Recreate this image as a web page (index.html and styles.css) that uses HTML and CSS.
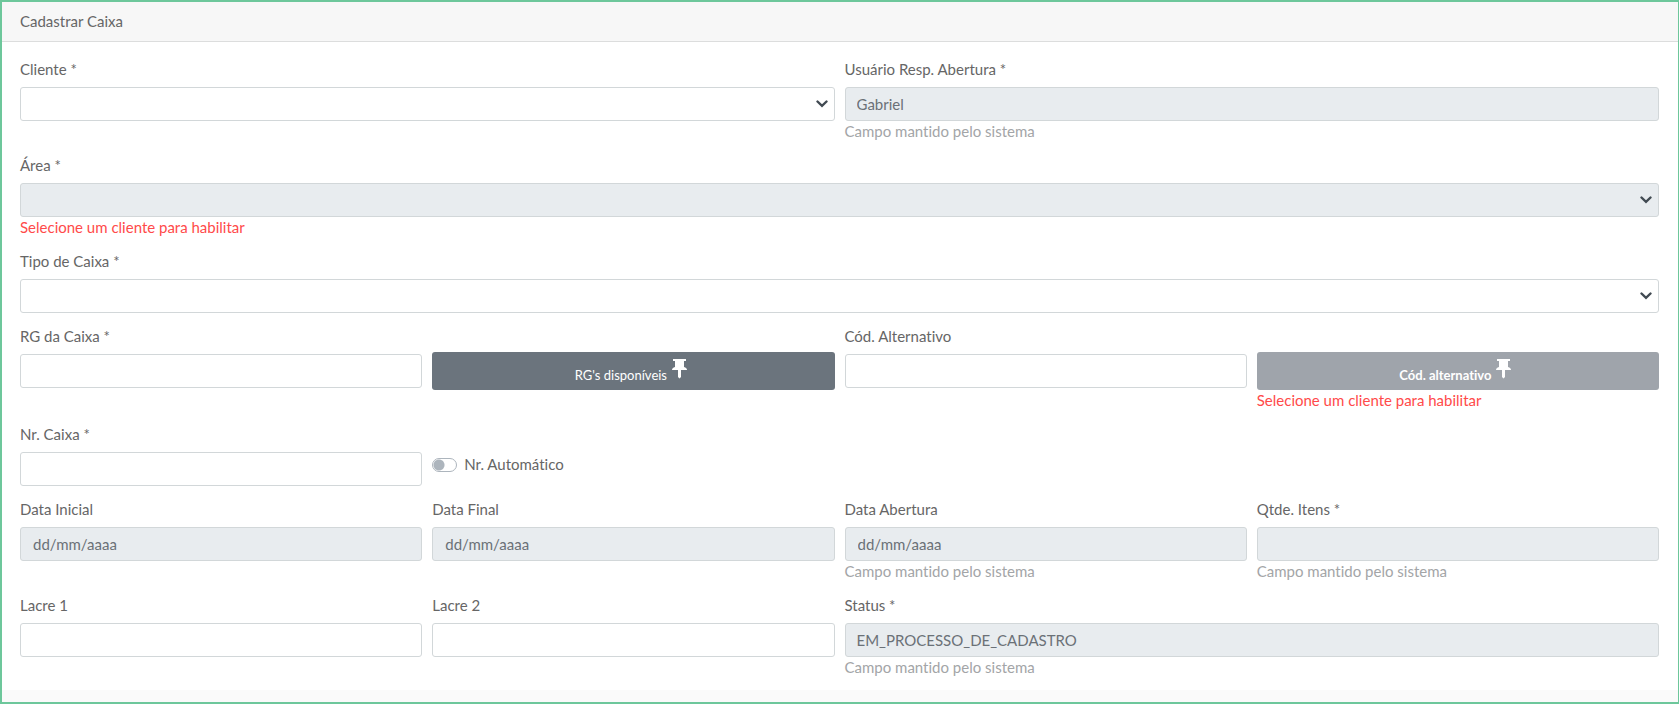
FILE: index.html
```html
<!DOCTYPE html>
<html lang="pt-BR">
<head>
<meta charset="utf-8">
<meta name="viewport" content="width=device-width, initial-scale=1">
<title>Cadastrar Caixa</title>
<link rel="stylesheet" href="styles.css">
</head>
<body>
<main class="card">
  <h1 class="card-header">Cadastrar Caixa</h1>
  <form class="card-body">
    <div class="field half">
      <label for="cliente">Cliente *</label>
      <select class="control" id="cliente"><option></option></select>
    </div>
    <div class="field half">
      <label for="usuario">Usuário Resp. Abertura *</label>
      <input class="control" id="usuario" type="text" value="Gabriel" disabled>
      <small class="hint">Campo mantido pelo sistema</small>
    </div>

    <div class="field full">
      <label for="area">Área *</label>
      <select class="control" id="area" disabled><option></option></select>
      <small class="hint error">Selecione um cliente para habilitar</small>
    </div>

    <div class="field full">
      <label for="tipo">Tipo de Caixa *</label>
      <select class="control" id="tipo"><option></option></select>
    </div>

    <div class="field">
      <label for="rg">RG da Caixa *</label>
      <input class="control" id="rg" type="text">
    </div>
    <div class="field action">
      <button class="btn" type="button">
        <span class="btn-text">RG's disponíveis</span>
        <svg class="pin" viewBox="0 0 15 20" aria-hidden="true"><path d="M1 0h13v2h-2v6c2 .5 3 1.500 3 3H9v7l-1.500 1.500L6 18v-7H0c0-1.500 1-2.500 3-3V2H1z"/></svg>
      </button>
    </div>
    <div class="field">
      <label for="codigo">Cód. Alternativo</label>
      <input class="control" id="codigo" type="text">
    </div>
    <div class="field action">
      <button class="btn" type="button" disabled>
        <span class="btn-text">Cód. alternativo</span>
        <svg class="pin" viewBox="0 0 15 20" aria-hidden="true"><path d="M1 0h13v2h-2v6c2 .5 3 1.500 3 3H9v7l-1.500 1.500L6 18v-7H0c0-1.500 1-2.500 3-3V2H1z"/></svg>
      </button>
      <small class="hint error">Selecione um cliente para habilitar</small>
    </div>

    <div class="field">
      <label for="numero">Nr. Caixa *</label>
      <input class="control" id="numero" type="text">
    </div>
    <div class="field toggle">
      <input class="switch" id="automatico" type="checkbox" role="switch">
      <label for="automatico">Nr. Automático</label>
    </div>

    <div class="field first">
      <label for="inicial">Data Inicial</label>
      <input class="control date" id="inicial" type="text" value="dd/mm/aaaa" disabled>
    </div>
    <div class="field">
      <label for="final">Data Final</label>
      <input class="control date" id="final" type="text" value="dd/mm/aaaa" disabled>
    </div>
    <div class="field">
      <label for="abertura">Data Abertura</label>
      <input class="control date" id="abertura" type="text" value="dd/mm/aaaa" disabled>
      <small class="hint">Campo mantido pelo sistema</small>
    </div>
    <div class="field">
      <label for="itens">Qtde. Itens *</label>
      <input class="control" id="itens" type="text" disabled>
      <small class="hint">Campo mantido pelo sistema</small>
    </div>

    <div class="field">
      <label for="lacre1">Lacre 1</label>
      <input class="control" id="lacre1" type="text">
    </div>
    <div class="field">
      <label for="lacre2">Lacre 2</label>
      <input class="control" id="lacre2" type="text">
    </div>
    <div class="field half">
      <label for="status">Status *</label>
      <input class="control" id="status" type="text" value="EM_PROCESSO_DE_CADASTRO" disabled>
      <small class="hint">Campo mantido pelo sistema</small>
    </div>
  </form>
</main>
</body>
</html>
```
FILE: styles.css
```css
* {
  box-sizing: border-box;
}

body {
  margin: 0;
  min-height: 100vh;
  border: 2px solid #6dc79b;
  border-right-width: 1px;
  background: #fafafa;
  color: #666;
  font: 15px/20px Lato, "Noto Sans", sans-serif;
  font-variant-ligatures: none;
}

.card {
  background: #fff;
}

.card-header {
  margin: 0;
  padding: 9px 18px 10px;
  border-bottom: 1px solid #dcdddd;
  background: #f7f7f7;
  font-size: 15px;
  font-weight: 400;
}

.card-body {
  display: grid;
  grid-template-columns: repeat(4, minmax(0, 1fr));
  gap: 13px 10px;
  padding: 17px 19px 12px 18px;
}

.field {
  display: flex;
  flex-direction: column;
}

.half {
  grid-column: span 2;
}

.full {
  grid-column: 1 / -1;
}

.first {
  grid-column-start: 1;
}

.field label {
  margin-bottom: 8px;
}

.control {
  width: 100%;
  height: 34px;
  padding: 0 11px;
  border: 1px solid #d2d7d9;
  border-radius: 3px;
  background-color: #fff;
  color: #6b7177;
  font: inherit;
}

.control:disabled {
  background-color: #e8ecef;
  opacity: 1;
}

.date {
  padding-left: 12px;
}

select.control {
  appearance: none;
  background-image: url("data:image/svg+xml,%3Csvg xmlns='http://www.w3.org/2000/svg' viewBox='0 0 12 8'%3E%3Cpath d='M1.500 1.500L6 5.800l4.500-4.300' fill='none' stroke='%23414a52' stroke-width='2.400' stroke-linecap='round'/%3E%3C/svg%3E");
  background-repeat: no-repeat;
  background-position: right 6px center;
  background-size: 12px 8px;
}

.hint {
  font-size: 15px;
  line-height: 21px;
  color: #a3a5a7;
}

.error {
  color: #ff4a4a;
}

.action {
  padding-top: 26px;
}

.btn {
  display: flex;
  justify-content: center;
  gap: 5px;
  height: 38px;
  padding: 7px 17px 7px 12px;
  border: 0;
  border-radius: 3px;
  background: #6b747d;
  color: #fff;
  font: 13px/16px Lato, "Noto Sans", sans-serif;
  font-variant-ligatures: none;
}

.btn:disabled {
  background: #9fa4ab;
  font-weight: 700;
}

.btn-text {
  align-self: flex-end;
}

.pin {
  width: 15px;
  height: 20px;
  fill: #fff;
}

.toggle {
  flex-direction: row;
  align-items: flex-start;
  gap: 7px;
  padding-top: 30px;
}

.switch {
  appearance: none;
  width: 25px;
  height: 14px;
  margin: 4px 0 0;
  border: 1px solid #adb5bd;
  border-radius: 7px;
  background: radial-gradient(circle at 6px 6px, #adb5bd 5px, #fff 6px);
}
```
